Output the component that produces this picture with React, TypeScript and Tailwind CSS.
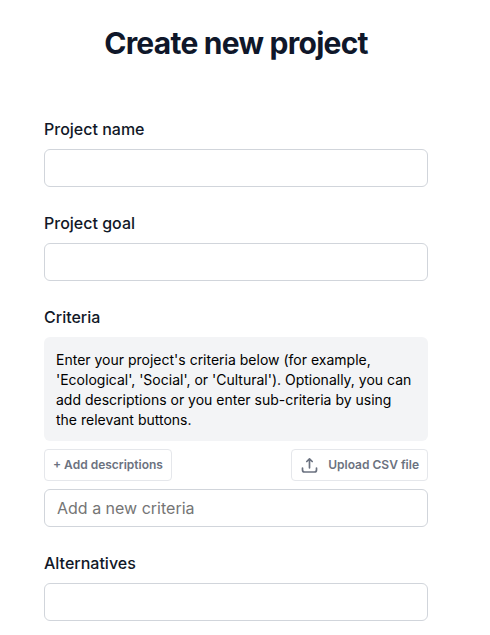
import React from "react";

function Field({ label, placeholder }: { label: string; placeholder?: string }) {
  return (
    <div className="flex flex-col">
      <label className="text-base font-medium leading-6 text-[#111827]">{label}</label>
      <input
        placeholder={placeholder}
        className="mt-2 h-[38px] w-full rounded-md border border-[#d1d5db] bg-white px-3 text-base text-[#111827] placeholder:text-[#757575]"
      />
    </div>
  );
}

export default function App() {
  return (
    <div className="h-[635px] w-[490px] overflow-hidden bg-white pl-11 pr-[62px] font-['Inter',sans-serif]">
      <h1 className="pt-[25px] text-center text-3xl font-bold leading-9 tracking-tight text-[#0f172a]">Create new project</h1>
      <div className="mt-[56px] flex flex-col gap-6">
        <Field label="Project name" />
        <Field label="Project goal" />
        <div className="flex flex-col">
          <label className="text-base font-medium leading-6 text-[#111827]">Criteria</label>
          <div className="mt-2 rounded-md bg-[#f3f4f6] px-3 pb-[11px] pt-[13px] text-sm leading-5 text-black">
            Enter your project's criteria below (for example, 'Ecological', 'Social', or 'Cultural'). Optionally, you can add descriptions or you enter sub-criteria by using the relevant buttons.
          </div>
          <div className="mt-2 flex items-center justify-between">
            <button className="h-8 rounded border border-[#e5e7eb] bg-white px-2 text-xs font-semibold text-[#6b7280]">+ Add descriptions</button>
            <button className="flex h-8 items-center gap-[10px] rounded border border-[#e5e7eb] bg-white pl-[9px] pr-2 text-xs font-semibold text-[#6b7280]">
              <svg width="17" height="17" viewBox="0 0 17 17" fill="none" stroke="#6b7280" strokeWidth="1.7" strokeLinecap="round" strokeLinejoin="round">
                <path d="M1.5 11v2a2 2 0 0 0 2 2h10a2 2 0 0 0 2-2v-2M5.8 4.5 8.5 1.8l2.700 2.700M8.500 1.800v9" />
              </svg>
              Upload CSV file
            </button>
          </div>
          <input
            placeholder="Add a new criteria"
            className="mt-2 h-[38px] w-full rounded-md border border-[#d1d5db] bg-white px-3 text-base text-[#111827] placeholder:text-[#757575]"
          />
        </div>
        <Field label="Alternatives" />
      </div>
    </div>
  );
}
